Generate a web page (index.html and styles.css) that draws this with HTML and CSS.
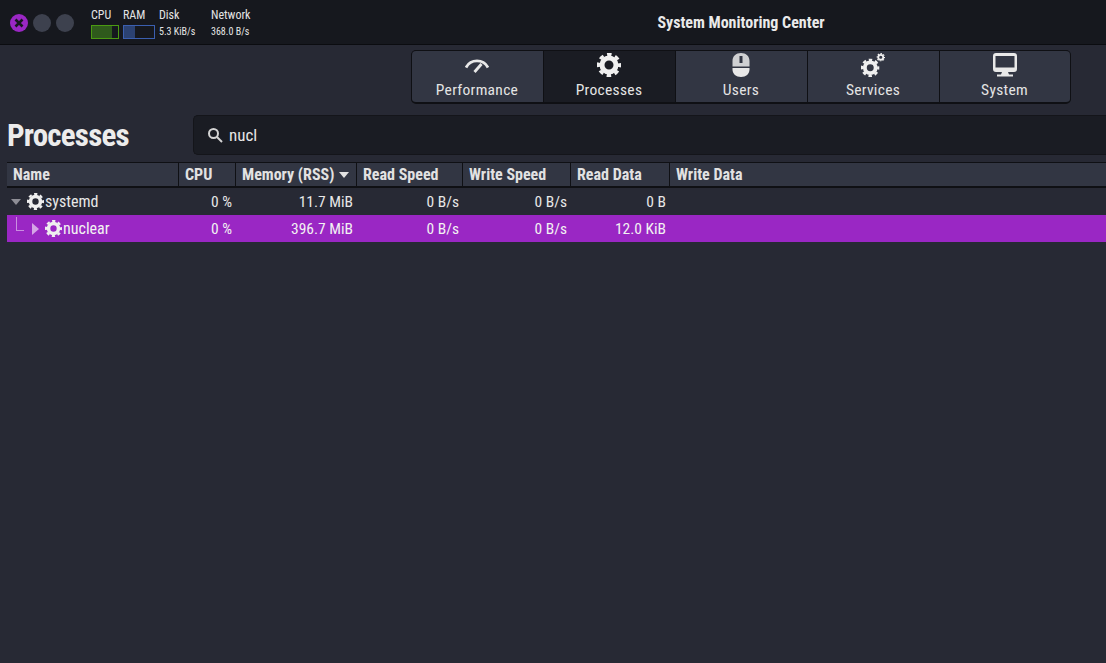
FILE: index.html
```html
<!DOCTYPE html>
<html lang="en">
<head>
<meta charset="utf-8">
<title>System Monitoring Center</title>
<link rel="stylesheet" href="styles.css">
</head>
<body>
<svg class="defs" width="0" height="0" aria-hidden="true">
  <defs>
    <symbol id="gear" viewBox="0 0 24 24">
      <circle class="gear-ring" cx="12" cy="12" r="7"/>
      <circle class="gear-teeth" cx="12" cy="12" r="10.500"/>
    </symbol>
  </defs>
</svg>
<header class="titlebar">
  <div class="win-buttons">
    <span class="win-btn close"><svg viewBox="0 0 12 12" width="12" height="12"><path d="M2.500 2.500l7 7M9.500 2.500l-7 7"/></svg></span>
    <span class="win-btn"></span>
    <span class="win-btn"></span>
  </div>
  <div class="meters">
    <div class="meter m-cpu"><span>CPU</span><div class="bar bar-cpu"><i class="fill" style="width:75%"></i></div></div>
    <div class="meter m-ram"><span>RAM</span><div class="bar bar-ram"><i class="fill" style="width:35%"></i></div></div>
    <div class="meter m-disk"><span>Disk</span><small>5.3 KiB/s</small></div>
    <div class="meter m-net"><span>Network</span><small>368.0 B/s</small></div>
  </div>
  <h1 class="app-title">System Monitoring Center</h1>
</header>
<nav class="tabs-row">
  <div class="tabs">
    <button class="tab">
      <svg class="tab-icon" viewBox="0 0 24 24"><path class="stroke" d="M1 14.500A12.500 12.500 0 0 1 23 14.500"/><path class="stroke2" d="M9.500 19l7-8"/></svg>
      <span>Performance</span>
    </button>
    <button class="tab active">
      <svg class="tab-icon"><use href="#gear"/></svg>
      <span>Processes</span>
    </button>
    <button class="tab">
      <svg class="tab-icon" viewBox="0 0 24 24"><path class="mouse-top" fill-rule="evenodd" d="M3.500 13.500V8c0-5 3.500-8 8.500-8s8.500 3 8.500 8v5.500zM10.500 3v7h3V3z"/><path d="M3.500 15h17v1.500c0 4.500-3.500 7.500-8.500 7.500s-8.500-3-8.500-7.500z"/></svg>
      <span>Users</span>
    </button>
    <button class="tab">
      <svg class="tab-icon" viewBox="0 0 24 24"><use href="#gear" x="0" y="5.500" width="18.500" height="18.500"/><use href="#gear" x="15.500" y="0" width="8.500" height="8.500"/></svg>
      <span>Services</span>
    </button>
    <button class="tab">
      <svg class="tab-icon" viewBox="0 0 24 24"><path fill-rule="evenodd" d="M3 0h18a3 3 0 0 1 3 3v13a3 3 0 0 1-3 3H3a3 3 0 0 1-3-3V3a3 3 0 0 1 3-3zM2.500 3v11.500h19V3zM9 19h6l1 2.500h4V23.500H4V21.500h4z"/></svg>
      <span>System</span>
    </button>
  </div>
</nav>
<section class="heading-row">
  <h2 class="page-title">Processes</h2>
  <div class="search">
    <svg class="search-icon" viewBox="0 0 16 16"><circle cx="6.500" cy="6.500" r="4.500"/><path d="M10 10l5 5"/></svg>
    <span>nucl</span>
  </div>
</section>
<section class="table">
  <div class="row head">
    <div class="c c-name">Name</div>
    <div class="c c-cpu">CPU</div>
    <div class="c c-mem">Memory (RSS)<i class="sort"></i></div>
    <div class="c c-rs">Read Speed</div>
    <div class="c c-ws">Write Speed</div>
    <div class="c c-rd">Read Data</div>
    <div class="c c-wd">Write Data</div>
  </div>
  <div class="row">
    <div class="c c-name parent"><i class="tri-down"></i><svg class="gear"><use href="#gear"/></svg><span>systemd</span></div>
    <div class="c c-cpu num">0 %</div>
    <div class="c c-mem num">11.7 MiB</div>
    <div class="c c-rs num">0 B/s</div>
    <div class="c c-ws num">0 B/s</div>
    <div class="c c-rd num">0 B</div>
    <div class="c c-wd"></div>
  </div>
  <div class="row selected">
    <div class="c c-name child"><i class="tree-line"></i><i class="tri-right"></i><svg class="gear"><use href="#gear"/></svg><span>nuclear</span></div>
    <div class="c c-cpu num">0 %</div>
    <div class="c c-mem num">396.7 MiB</div>
    <div class="c c-rs num">0 B/s</div>
    <div class="c c-ws num">0 B/s</div>
    <div class="c c-rd num">12.0 KiB</div>
    <div class="c c-wd"></div>
  </div>
</section>
</body>
</html>
```
FILE: styles.css
```css
* { box-sizing: border-box; }
html, body { margin: 0; height: 100%; overflow: hidden; }
body {
  width: 1106px; height: 663px;
  background: #272934; color: #e8e8e8;
  font-family: "Liberation Sans Narrow", "Roboto Condensed", "Liberation Sans", sans-serif;
  font-size: 15px;
}
.defs { position: absolute; }
.gear-ring { fill: none; stroke: #efefef; stroke-width: 5; }
.gear-teeth { fill: none; stroke: #efefef; stroke-width: 3.200; stroke-dasharray: 4.500 3.747; stroke-dashoffset: 2.250; }
.titlebar {
  height: 45px; background: #16181e; border-bottom: 1px solid #0b0c10;
  display: flex; align-items: center; position: relative; padding-left: 10px;
}
.win-buttons { display: flex; gap: 5px; margin-top: 2px; }
.win-btn { width: 18px; height: 18px; border-radius: 50%; background: #3d414e; display: flex; align-items: center; justify-content: center; }
.win-btn.close { background: #9a27c4; }
.win-btn svg path { stroke: #16181e; stroke-width: 2.600; fill: none; }
.meters { display: flex; margin: 2px 0 0 17px; font-size: 12px; color: #e4e4e4; }
.meter { display: flex; flex-direction: column; gap: 3px; }
.meter small { font-size: 10px; line-height: 14px; }
.meter span { line-height: 14px; }
.m-cpu { width: 32px; }
.m-ram { width: 36px; }
.m-disk { width: 52px; }
.bar { height: 14px; width: 28px; border: 1px solid #4b9a12; background: #16181e; }
.bar-ram { width: 32px; border-color: #3b5fb0; }
.fill { display: block; height: 100%; background: #2f5a1c; }
.bar-ram .fill { background: #2c4272; }
.app-title { position: absolute; left: 376px; right: 0; top: 14px; margin: 0; text-align: center; font-size: 16px; line-height: 18px; font-weight: 700; color: #eaeaea; }
.tabs-row { display: flex; padding: 5px 0 0 411px; }
.tabs { display: flex; height: 54px; border: 1px solid #0f1014; border-bottom-width: 2px; border-radius: 5px; overflow: hidden; background: #0f1014; gap: 1px; }
.tab {
  width: 131px; border: 0; padding: 2px 1px 0 0; background: #323643; color: #e4e4e4;
  font: inherit; font-size: 15.500px; display: flex; flex-direction: column; align-items: center; gap: 4px;
}
.tab:last-child { width: 130px; }
.tab.active { background: #1a1c23; }
.tab span { line-height: 18px; letter-spacing: .3px; }
.tab-icon { width: 24px; height: 24px; fill: #e8e8e8; }
.mouse-top { fill: #cfd0d2; }
.stroke { fill: none; stroke: #e8e8e8; stroke-width: 2.800; }
.stroke2 { fill: none; stroke: #e8e8e8; stroke-width: 2.800; }
.heading-row { display: flex; align-items: flex-start; padding: 11px 0 0 7px; height: 58px; }
.page-title { margin: 0; width: 186px; font-size: 31px; line-height: 41px; font-weight: 700; color: #ececec; letter-spacing: -.8px; }
.search {
  flex: 1; height: 40px; background: #1a1c23; border: 1px solid #14151a; border-right: 0;
  border-radius: 5px 0 0 5px; display: flex; align-items: center; padding-left: 13px; gap: 6px; font-size: 17px; color: #e6e6e6;
}
.search-icon { width: 16px; height: 16px; fill: none; stroke: #d4d4d4; stroke-width: 2; }
.table { margin-left: 7px; }
.row { display: flex; height: 27px; align-items: center; font-size: 16px; }
.row.head { height: 26px; background: #323643; border-top: 1px solid #0f1014; border-bottom: 2px solid #0f1014; font-weight: 700; font-size: 16px; color: #e2e2e2; }
.row.selected { background: #9a27c4; color: #f2f2f2; }
.c { height: 100%; display: flex; align-items: center; padding: 0 3px 0 6px; flex: none; }
.num { justify-content: flex-end; font-size: 15.500px; }
.head .c + .c { border-left: 1px solid #0f1014; }
.c-name { width: 171px; padding-left: 6px; }
.c-cpu { width: 57px; }
.c-mem { width: 121px; }
.c-rs { width: 106px; }
.c-ws { width: 108px; }
.c-rd { width: 99px; }
.c-wd { flex: 1; }
.sort { width: 0; height: 0; border: 5.500px solid transparent; border-top: 6px solid #e2e2e2; border-bottom: 0; margin-left: 5px; }
.gear { width: 17px; height: 17px; flex: none; margin-right: 1px; }
.c-name.parent { padding-left: 4px; }
.tri-down { width: 0; height: 0; border: 5.500px solid transparent; border-top: 6px solid #8e8e96; border-bottom: 0; margin: 1px 5px 0 0; }
.parent .gear { margin-left: 1px; }
.tri-right { width: 0; height: 0; border: 6px solid transparent; border-left: 7px solid #d5a5e6; border-right: 0; margin: 1px 6px 0 0; }
.child { position: relative; padding-left: 25px; }
.tree-line { position: absolute; left: 9px; top: 2px; width: 8px; height: 14px; border-left: 1px solid #c98fe0; border-bottom: 1px solid #c98fe0; }
```
